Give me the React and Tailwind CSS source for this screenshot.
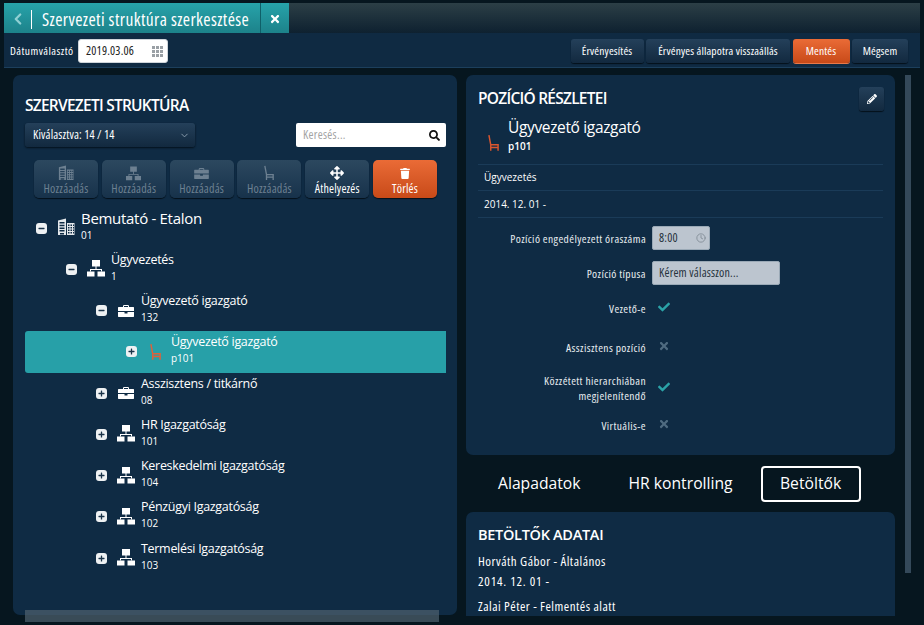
import React from 'react';
import { FaCheck, FaTimes, FaSearch, FaTrash, FaArrowsAlt, FaPencilAlt, FaPlus, FaMinus } from 'react-icons/fa';
import { LuClock, LuChevronLeft, LuChevronDown } from 'react-icons/lu';

const Building = ({ className }) => (
  <svg viewBox="0 0 18 18" className={className} fill="currentColor">
    <path d="M1 2.5 9 0.5V17H1zM2.5 4v1.5h5V4zm0 2.7v1.5h5V6.7zm0 2.7v1.5h5V9.4zm0 2.7v1.5h5v-1.5zM3 15v1.5h4V15z" fillRule="evenodd" />
    <path d="M10 5h7.5v12H10zm1 1.5v1.5h1.5V6.5zm2.5 0v1.5H15V6.5zm2.500 0v1.500h1V6.500zM11 9v1.500h1.500V9zm2.500 0v1.500H15V9zM16 9v1.500h1V9zm-5 2.500V13h1.500v-1.500zm2.500 0V13H15v-1.500zm2.500 0V13h1v-1.500zM11 14v1.500h1.500V14zm2.500 0v1.500H15V14zm2.500 0v1.500h1V14z" fillRule="evenodd" />
  </svg>
);

const Sitemap = ({ className }) => (
  <svg viewBox="0 0 18 17" className={className} fill="currentColor">
    <path d="M5 0h8v6.500H5zM8.500 6.500h1V9H15v2.500h-1V10H4v1.500H3V9h5.500z" />
    <path d="M0 11.500h7.500V16.500H0zM10.500 11.500H18V16.500h-7.500z" />
  </svg>
);

const Briefcase = ({ className }) => (
  <svg viewBox="0 0 16 12" className={className} fill="currentColor">
    <path d="M5 2V0.800L5.800 0h4.400l.800.800V2h4.500l.500.500V6H0V2.500L.500 2zm1 0h4V1H6z" fillRule="evenodd" />
    <path d="M0 7h6.500v1.500h3V7H16v4.500l-.500.500H.500L0 11.500z" />
  </svg>
);

const Chair = ({ className }) => (
  <svg viewBox="0 0 12 19" className={className} fill="none" stroke="currentColor" strokeWidth="1.600">
    <path d="M1 1l2 10.500h8V18M3 11.500V18M3 14.500h8" />
  </svg>
);

const BarButton = ({ children, orange, className }) => (
  <button className={`h-[24px] rounded-[3px] text-[11.500px] tracking-[0.150px] font-medium [font-stretch:75%] text-white ${className} ${orange ? 'bg-gradient-to-b from-[#ea6b36] to-[#c84a18] shadow-[0_1px_0_#e8794a]' : 'bg-gradient-to-b from-[#24405a] to-[#12293f] shadow-[0_1px_1px_#04101a]'}`}>
    {children}
  </button>
);

const ActionButton = ({ icon, label, disabled, orange }) => (
  <button className={`w-[64px] h-[38px] rounded-[5px] flex flex-col items-center justify-end pb-[2px] text-[12px] tracking-[0.200px] [font-stretch:75%] shadow-[0_1px_1px_#04101a] ${orange ? 'bg-gradient-to-b from-[#ea6b36] to-[#c84a18] text-white font-medium' : disabled ? 'bg-gradient-to-b from-[#2c485f] to-[#17324b] text-[#6d8091]' : 'bg-gradient-to-b from-[#2c485f] to-[#17324b] text-white font-medium'}`}>
    <span className="h-[18px] flex items-center">{icon}</span>
    <span className="leading-[14px]">{label}</span>
  </button>
);

const treeRows = [
  { level: 0, type: 'building', name: 'Bemutató - Etalon', code: '01', open: true, big: true },
  { level: 1, type: 'unit', name: 'Ügyvezetés', code: '1', open: true },
  { level: 2, type: 'job', name: 'Ügyvezető igazgató', code: '132', open: true },
  { level: 3, type: 'chair', name: 'Ügyvezető igazgató', code: 'p101', selected: true },
  { level: 2, type: 'job', name: 'Asszisztens / titkárnő', code: '08' },
  { level: 2, type: 'unit', name: 'HR Igazgatóság', code: '101' },
  { level: 2, type: 'unit', name: 'Kereskedelmi Igazgatóság', code: '104' },
  { level: 2, type: 'unit', name: 'Pénzügyi Igazgatóság', code: '102' },
  { level: 2, type: 'unit', name: 'Termelési Igazgatóság', code: '103' },
];

const TreeIcon = ({ type }) => {
  if (type === 'building') return <Building className="w-[18px] h-[18px] text-[#e4e8eb] -mt-[2px]" />;
  if (type === 'unit') return <Sitemap className="w-[18px] h-[17px] text-white -mt-[1px]" />;
  if (type === 'job') return <Briefcase className="w-[16px] h-[12px] text-white" />;
  return <Chair className="w-[11px] h-[18px] text-[#e0603a] -ml-[2px]" />;
};

const TreeRow = ({ row }) => (
  <div
    className={`h-[41.250px] flex items-center rounded-l-[3px] ${row.selected ? 'bg-[#27a0a8]' : ''}`}
    style={{ paddingLeft: 11 + row.level * 30 }}
  >
    <span className="w-[11px] h-[11px] rounded-[3px] bg-[#eef1f3] flex items-center justify-center text-[#1b3449]">
      {row.open ? <FaMinus className="w-[7px] h-[7px]" /> : <FaPlus className="w-[7px] h-[7px]" />}
    </span>
    <span className="w-[34px] pl-[4px] flex justify-center"><TreeIcon type={row.type} /></span>
    <div className={`flex flex-col text-white ${row.big ? '-mt-[5px]' : '-mt-[4px]'}`}>
      <span className={`leading-[18px] tracking-[-0.300px] ${row.big ? 'text-[15px] mb-[1px]' : 'text-[12.500px]'}`}>{row.name}</span>
      <span className="text-[10px] leading-[15px]">{row.code}</span>
    </div>
  </div>
);

const FormRow = ({ label, children, className }) => (
  <div className={`flex items-center gap-[6px] ${className}`}>
    <div className="w-[168px] text-right text-[11.500px] leading-[15px] tracking-[0.400px] [font-stretch:75%] text-[#e8edf0] font-medium">{label}</div>
    {children}
  </div>
);

const Yes = () => <FaCheck className="ml-[6px] -mt-[2px] w-[12px] h-[12px] text-[#2ba3a8]" />;
const No = () => <FaTimes className="ml-[6px] -mt-[2px] w-[12px] h-[12px] text-[#4f6b80]" />;

export default function App() {
  return (
    <div className="w-[924px] h-[625px] overflow-hidden flex flex-col bg-[#06161f] font-['Open_Sans','Liberation_Sans',sans-serif]">
      {/* header */}
      <div className="mt-[3px] ml-[4px] mr-[4px] h-[30px] flex bg-gradient-to-b from-[#2c3f46] to-[#0e2130]">
        <div className="h-[32px] flex items-center bg-gradient-to-b from-[#27a3aa] to-[#1c8088] text-white">
          <span className="w-[27px] flex justify-center"><LuChevronLeft strokeWidth={3} className="w-[18px] h-[18px] text-[#8fd0d3]" /></span>
          <span className="w-px h-[19px] bg-white" />
          <span className="w-[228px] pl-[10px] text-[17.500px] tracking-[0.400px] [font-stretch:75%] whitespace-nowrap">Szervezeti struktúra szerkesztése</span>
          <span className="w-[29px] h-full border-l border-[#0f5f68] flex items-center justify-center"><FaTimes className="w-[12px] h-[12px]" /></span>
        </div>
      </div>

      {/* toolbar */}
      <div className="ml-[4px] mr-[4px] h-[35px] shrink-0 flex items-center bg-[#0f2a42] border-b border-[#1c3f5c] pl-[6px] pr-[12px] pt-[2px]">
        <span className="w-[68px] text-[11.500px] font-medium tracking-[0.450px] [font-stretch:75%] text-white">Dátumválasztó</span>
        <div className="w-[90px] h-[24px] bg-white rounded-[3px] border border-[#cfd5da] flex items-center justify-between pl-[7px] pr-[4px] text-[12px] tracking-[0.200px] [font-stretch:75%] text-[#222]">
          2019.03.06
          <span className="grid grid-cols-3 gap-px">
            {[0, 1, 2, 3, 4, 5, 6, 7, 8].map((i) => <i key={i} className="w-[3px] h-[3px] bg-[#9aa0a5]" />)}
          </span>
        </div>
        <div className="ml-auto flex gap-[2.500px]">
          <BarButton className="w-[73px]">Érvényesítés</BarButton>
          <BarButton className="w-[144px]">Érvényes állapotra visszaállás</BarButton>
          <BarButton className="w-[57px]" orange>Mentés</BarButton>
          <BarButton className="w-[56px]">Mégsem</BarButton>
        </div>
      </div>

      {/* main */}
      <div className="flex-1 min-h-0 flex pt-[7px] pl-[13px] relative">
        <div className="w-[444px] h-[540px] rounded-[7px] bg-[#0f2b44] pt-[20px] pl-[12px] pr-[11px]">
          <h2 className="text-[15.500px] leading-[20px] font-semibold tracking-[-0.750px] text-white">SZERVEZETI STRUKTÚRA</h2>
          <div className="mt-[8px] flex justify-between">
            <div className="w-[170px] h-[24px] rounded-[3px] bg-gradient-to-b from-[#24405a] to-[#12293f] shadow-[0_1px_2px_#04101a] flex items-center justify-between pl-[8px] pr-[5px] text-[12px] font-medium tracking-[0.150px] [font-stretch:75%] text-white">
              Kiválasztva: 14 / 14
              <LuChevronDown className="w-[11px] h-[11px] text-[#8ea1b1]" />
            </div>
            <div className="w-[150px] h-[24px] rounded-[2px] bg-white flex items-center justify-between pl-[7px] pr-[6px] text-[12px] tracking-[0.300px] [font-stretch:75%] text-[#a3a3a3]">
              Keresés...
              <FaSearch className="w-[11px] h-[11px] text-[#111]" />
            </div>
          </div>
          <div className="mt-[13px] ml-[9px] flex gap-[3.800px]">
            <ActionButton disabled label="Hozzáadás" icon={<Building className="w-[16px] h-[16px]" />} />
            <ActionButton disabled label="Hozzáadás" icon={<Sitemap className="w-[15px] h-[15px]" />} />
            <ActionButton disabled label="Hozzáadás" icon={<Briefcase className="w-[15px] h-[11px]" />} />
            <ActionButton disabled label="Hozzáadás" icon={<Chair className="w-[10px] h-[16px]" />} />
            <ActionButton label="Áthelyezés" icon={<FaArrowsAlt className="w-[14px] h-[14px]" />} />
            <ActionButton orange label="Törlés" icon={<FaTrash className="w-[10px] h-[11px]" />} />
          </div>
          <div className="mt-[9.500px]">
            {treeRows.map((row, i) => <TreeRow key={i} row={row} />)}
          </div>
        </div>

        <div className="ml-[9px] w-[429px] flex flex-col">
          <div className="h-[380px] shrink-0 rounded-[7px] bg-[#0f2b44] px-[12px] pt-[12px]">
            <div className="flex items-center justify-between h-[24px]">
              <h2 className="text-[15.500px] leading-[20px] -mt-[3px] font-semibold tracking-[-0.750px] text-white">POZÍCIÓ RÉSZLETEI</h2>
              <button className="w-[25px] h-[24px] mr-[-1px] rounded-[3px] bg-gradient-to-b from-[#24405a] to-[#12293f] shadow-[0_1px_1px_#04101a] flex items-center justify-center">
                <FaPencilAlt className="w-[10px] h-[10px] text-white" />
              </button>
            </div>
            <div className="h-[54px] flex border-b border-[#1a3b58]">
              <Chair className="w-[11px] h-[18px] text-[#d9562f] ml-[10px] mt-[23px]" />
              <div className="ml-[9px] flex flex-col text-white">
                <span className="text-[15.500px] leading-[22px] tracking-[-0.350px] mt-[5px]">Ügyvezető igazgató</span>
                <span className="text-[10px] leading-[15px] font-semibold mt-[1px]">p101</span>
              </div>
            </div>
            <div className="h-[26px] flex items-center pl-[6px] border-b border-[#1a3b58] text-[10px] text-white">Ügyvezetés</div>
            <div className="h-[27px] flex items-center pl-[6px] pt-[1px] border-b border-[#1a3b58] text-[10px] text-white">2014. 12. 01 -</div>
            <FormRow label="Pozíció engedélyezett óraszáma" className="mt-[8px] h-[24px]">
              <div className="w-[58px] h-[24px] rounded-[2px] bg-[#bcc5cf] border border-[#9aa9b6] flex items-center justify-between pl-[6px] pr-[3px] text-[12px] tracking-[0.200px] [font-stretch:75%] text-[#26323c]">
                8:00
                <LuClock className="w-[10px] h-[10px] text-[#7f8a94]" />
              </div>
            </FormRow>
            <FormRow label="Pozíció típusa" className="mt-[11px] h-[24px]">
              <div className="w-[128px] h-[24px] rounded-[2px] bg-[#bcc5cf] border border-[#9aa9b6] flex items-center pl-[6px] text-[12px] tracking-[0.200px] [font-stretch:75%] text-[#26323c]">Kérem válasszon...</div>
            </FormRow>
            <FormRow label="Vezető-e" className="mt-[13px] h-[20px]"><Yes /></FormRow>
            <FormRow label="Asszisztens pozíció" className="mt-[19px] h-[20px]"><No /></FormRow>
            <FormRow label={<>Közzétett hierarchiában<br />megjelenítendő</>} className="mt-[16px] h-[30px]"><Yes /></FormRow>
            <FormRow label="Virtuális-e" className="mt-[12px] h-[20px]"><No /></FormRow>
          </div>

          <div className="h-[57px] shrink-0 flex items-center text-[15.700px] text-white">
            <span className="ml-[32px]">Alapadatok</span>
            <span className="ml-[48px]">HR kontrolling</span>
            <span className="ml-[28px] w-[100px] h-[36px] rounded-[4px] border-2 border-white flex items-center justify-center">Betöltők</span>
          </div>

          <div className="flex-1 rounded-t-[7px] bg-[#0f2b44] px-[12px] pt-[13px] overflow-hidden text-white">
            <h2 className="text-[14.500px] leading-[20px] font-semibold tracking-[-0.300px]">BETÖLTŐK ADATAI</h2>
            <p className="mt-[6px] text-[13px] leading-[20px] tracking-[0.500px] [font-stretch:75%]">Horváth Gábor - Általános</p>
            <p className="text-[13px] leading-[20px] tracking-[0.800px] [font-stretch:75%]">2014. 12. 01 -</p>
            <p className="mt-[5px] text-[13px] leading-[20px] tracking-[0.500px] [font-stretch:75%]">Zalai Péter - Felmentés alatt</p>
          </div>
        </div>

        {/* scrollbars */}
        <div className="absolute left-[905px] top-[7px] w-[6px] h-[498px] bg-[#34495a]" />
        <div className="absolute left-[25px] bottom-[-6px] w-[414px] h-[12px] bg-[#50626f]/70" />
      </div>
      <div className="h-[9px] shrink-0 bg-[#06161f]" />
    </div>
  );
}
